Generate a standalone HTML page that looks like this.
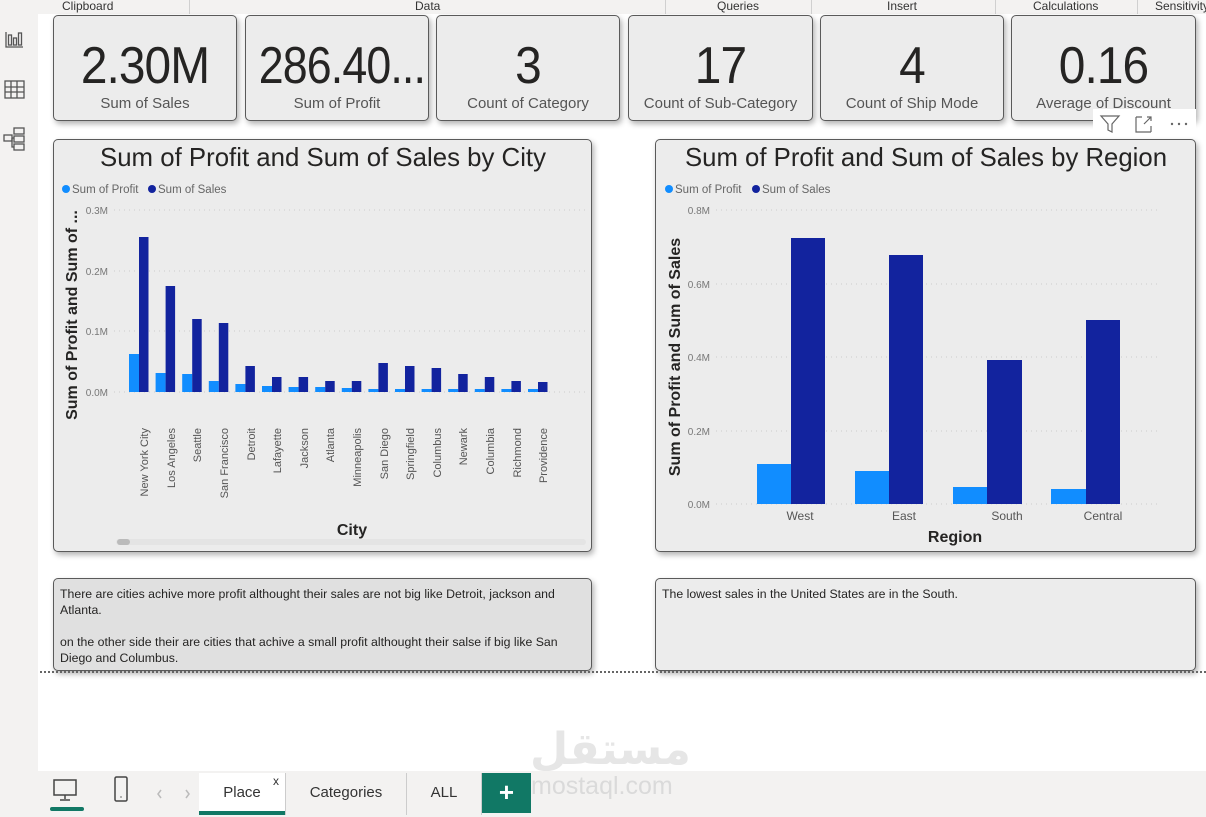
<!DOCTYPE html>
<html><head><meta charset="utf-8"><style>
*{margin:0;padding:0;box-sizing:border-box}
body{width:1206px;height:817px;overflow:hidden;background:#fff;font-family:"Liberation Sans",sans-serif;position:relative;color:#252423}
.abs{position:absolute}
.rib{top:0;left:0;width:1206px;height:14px;background:#f3f2f1;font-size:12px;color:#333}
.rib span{position:absolute;top:-1px}
.rib i{position:absolute;top:0;width:1px;height:14px;background:#d0d0d0}
.side{top:14px;left:0;width:38px;height:757px;background:#f3f2f1}
.card{background:#ececec;border:1px solid #5a5a5a;border-radius:5px;box-shadow:2px 3px 6px rgba(0,0,0,.3);text-align:center}
.card .v{font-size:52px;line-height:52px;margin-top:24px;letter-spacing:-1px;color:#252423;transform:scaleX(.92)}
.card .l{font-size:15px;color:#555;margin-top:3px;white-space:nowrap}
.ch{background:#ececec;border:1px solid #5a5a5a;border-radius:5px;box-shadow:2px 3px 6px rgba(0,0,0,.3)}
.tb{border:1px solid #5a5a5a;border-radius:5px;box-shadow:2px 3px 6px rgba(0,0,0,.3);font-size:12px;line-height:16px;padding:7px 6px;color:#252423}
.bot{top:771px;left:0;width:1206px;height:46px;background:#f3f2f1}
.tab{top:773px;height:42px;font-size:15px;text-align:center;line-height:40px;color:#333;border-right:1px solid #ccc}
</style></head><body>
<div class="abs rib">
<span style="left:62px">Clipboard</span><i style="left:189px"></i>
<span style="left:415px">Data</span><i style="left:665px"></i>
<span style="left:717px">Queries</span><i style="left:811px"></i>
<span style="left:887px">Insert</span><i style="left:995px"></i>
<span style="left:1033px">Calculations</span><i style="left:1137px"></i>
<span style="left:1155px">Sensitivity</span>
</div>
<div class="abs side">
<svg width="38" height="140" style="position:absolute;top:10px;left:0" fill="none" stroke="#555" stroke-width="1.3">
<path d="M6 8v15h17"/><rect x="8.5" y="11" width="3" height="10"/><rect x="13.5" y="14" width="3" height="7"/><rect x="18.5" y="9" width="3" height="12"/>
<rect x="5" y="57" width="19" height="17"/><path d="M5 63h19M5 68h19M11 57v17M17 57v17"/>
<rect x="4" y="111" width="8" height="6"/><rect x="14" y="104" width="10" height="6"/><rect x="14" y="112" width="10" height="6"/><rect x="14" y="120" width="10" height="6"/><path d="M12 114h2M12 114v9h2"/>
</svg>
</div>

<div class="abs card" style="left:53px;top:15px;width:184px;height:106px"><div class="v">2.30M</div><div class="l">Sum of Sales</div></div>
<div class="abs card" style="left:245px;top:15px;width:184px;height:106px"><div class="v" style="transform:scaleX(.86)">286.40...</div><div class="l">Sum of Profit</div></div>
<div class="abs card" style="left:436px;top:15px;width:184px;height:106px"><div class="v">3</div><div class="l">Count of Category</div></div>
<div class="abs card" style="left:628px;top:15px;width:185px;height:106px"><div class="v">17</div><div class="l">Count of Sub-Category</div></div>
<div class="abs card" style="left:820px;top:15px;width:184px;height:106px"><div class="v">4</div><div class="l">Count of Ship Mode</div></div>
<div class="abs card" style="left:1011px;top:15px;width:185px;height:106px"><div class="v">0.16</div><div class="l">Average of Discount</div></div>

<div class="abs ch" style="left:53px;top:139px;width:539px;height:413px"></div>
<div class="abs ch" style="left:655px;top:139px;width:541px;height:413px"></div>

<div class="abs" style="left:1093px;top:109px;width:103px;height:27px;background:#fff"></div>

<div class="abs tb" style="left:53px;top:578px;width:539px;height:93px;background:#e0e0e0;font-size:12.3px">There are cities achive more profit althought their sales are not big like Detroit, jackson and Atlanta.<br><br>on the other side their are cities that achive a small profit althought their salse if big like San Diego and Columbus.</div>
<div class="abs tb" style="left:655px;top:578px;width:541px;height:93px;background:#ececec;font-size:12.3px">The lowest sales in the United States are in the South.</div>
<div class="abs" style="left:40px;top:671px;width:1166px;border-top:2px dotted #666"></div>

<div class="abs" style="left:530px;top:722px;font-family:'DejaVu Sans',sans-serif;font-size:44px;font-weight:bold;color:#e6e6e6;line-height:56px">مستقل</div>

<div class="abs bot"></div>
<svg class="abs" style="left:40px;top:771px" width="160" height="46" fill="none" stroke="#444" stroke-width="1.5">
<rect x="14" y="9" width="22" height="15"/><path d="M25 24v4M20 29h10"/>
<path d="M12 38h30" stroke="#117865" stroke-width="4" stroke-linecap="round"/>
<rect x="75" y="6" width="12" height="24" rx="1.5"/><path d="M80.5 26h1"/>
<path d="M121 19l-3 4 3 4M146 19l3 4-3 4" stroke="#bbb"/>
</svg>
<div class="abs tab" style="left:199px;width:87px;background:#fff">Place<span style="position:absolute;right:6px;top:-12px;font-size:12px">x</span><div style="position:absolute;left:0;bottom:0;width:86px;height:4px;background:#117865"></div></div>
<div class="abs tab" style="left:286px;width:121px">Categories</div>
<div class="abs tab" style="left:407px;width:75px">ALL</div>
<div class="abs" style="left:482px;top:773px;width:49px;height:40px;background:#117865;color:#fff;font-size:26px;font-weight:bold;text-align:center;line-height:38px">+</div>
<div class="abs" style="left:531px;top:772px;font-size:25px;color:#dadada">mostaql.com</div>

<svg class="abs" style="left:0;top:0" width="1206" height="817" font-family="Liberation Sans, sans-serif">
<g fill="none" stroke="#666" stroke-width="1.2">
<path d="M1101 116h18l-7 8v8l-4-2v-6z"/>
<path d="M1136 117v15h15M1136 117h6M1151 126v6M1144 124l7-7M1147 117h4v4"/>
</g>
<g fill="#666"><circle cx="1172" cy="124" r="1.2"/><circle cx="1179" cy="124" r="1.2"/><circle cx="1186" cy="124" r="1.2"/></g>

<text x="323" y="166" font-size="26" text-anchor="middle" fill="#252423" textLength="446" lengthAdjust="spacingAndGlyphs">Sum of Profit and Sum of Sales by City</text>
<circle cx="66" cy="189" r="4" fill="#118dff"/><text x="72" y="193" font-size="11.5" fill="#666">Sum of Profit</text>
<circle cx="152" cy="189" r="4" fill="#12239e"/><text x="158" y="193" font-size="11.5" fill="#666">Sum of Sales</text>
<g font-size="10" fill="#777" text-anchor="end"><text x="108" y="214">0.3M</text><text x="108" y="275">0.2M</text><text x="108" y="335">0.1M</text><text x="108" y="396">0.0M</text></g>
<g stroke="#ccc" stroke-dasharray="1 4"><path d="M114 210H585M114 271H585M114 331H585M114 392H585"/></g>
<text transform="translate(77,315) rotate(-90)" font-size="16" font-weight="bold" text-anchor="middle" fill="#252423">Sum of Profit and Sum of ...</text>
<g fill="#118dff">
<rect x="129" y="354" width="10" height="38"/><rect x="155.6" y="373" width="10" height="19"/><rect x="182.2" y="374" width="10" height="18"/><rect x="208.8" y="381" width="10" height="11"/><rect x="235.4" y="384" width="10" height="8"/><rect x="262" y="386" width="10" height="6"/><rect x="288.6" y="387" width="10" height="5"/><rect x="315.2" y="387" width="10" height="5"/><rect x="341.8" y="388" width="10" height="4"/><rect x="368.4" y="389" width="10" height="3"/><rect x="395" y="389" width="10" height="3"/><rect x="421.6" y="389" width="10" height="3"/><rect x="448.2" y="389" width="10" height="3"/><rect x="474.8" y="389" width="10" height="3"/><rect x="501.4" y="389" width="10" height="3"/><rect x="528" y="389" width="10" height="3"/>
</g>
<g fill="#12239e">
<rect x="139" y="237" width="9.5" height="155"/><rect x="165.6" y="286" width="9.5" height="106"/><rect x="192.2" y="319" width="9.5" height="73"/><rect x="218.8" y="323" width="9.5" height="69"/><rect x="245.4" y="366" width="9.5" height="26"/><rect x="272" y="377" width="9.5" height="15"/><rect x="298.6" y="377" width="9.5" height="15"/><rect x="325.2" y="381" width="9.5" height="11"/><rect x="351.8" y="381" width="9.5" height="11"/><rect x="378.4" y="363" width="9.5" height="29"/><rect x="405" y="366" width="9.5" height="26"/><rect x="431.6" y="368" width="9.5" height="24"/><rect x="458.2" y="374" width="9.5" height="18"/><rect x="484.8" y="377" width="9.5" height="15"/><rect x="511.4" y="381" width="9.5" height="11"/><rect x="538" y="382" width="9.5" height="10"/>
</g>
<g font-size="11" fill="#555" text-anchor="end">
<text transform="translate(148,428) rotate(-90)">New York City</text>
<text transform="translate(175,428) rotate(-90)">Los Angeles</text>
<text transform="translate(201,428) rotate(-90)">Seattle</text>
<text transform="translate(228,428) rotate(-90)">San Francisco</text>
<text transform="translate(255,428) rotate(-90)">Detroit</text>
<text transform="translate(281,428) rotate(-90)">Lafayette</text>
<text transform="translate(308,428) rotate(-90)">Jackson</text>
<text transform="translate(334,428) rotate(-90)">Atlanta</text>
<text transform="translate(361,428) rotate(-90)">Minneapolis</text>
<text transform="translate(388,428) rotate(-90)">San Diego</text>
<text transform="translate(414,428) rotate(-90)">Springfield</text>
<text transform="translate(441,428) rotate(-90)">Columbus</text>
<text transform="translate(467,428) rotate(-90)">Newark</text>
<text transform="translate(494,428) rotate(-90)">Columbia</text>
<text transform="translate(521,428) rotate(-90)">Richmond</text>
<text transform="translate(547,428) rotate(-90)">Providence</text>
</g>
<text x="352" y="535" font-size="16" font-weight="bold" text-anchor="middle" fill="#252423">City</text>
<rect x="116" y="539" width="470" height="6" rx="3" fill="#e4e4e4"/><rect x="117" y="539" width="13" height="6" rx="3" fill="#bbb"/>

<text x="926" y="166" font-size="26" text-anchor="middle" fill="#252423" textLength="482" lengthAdjust="spacingAndGlyphs">Sum of Profit and Sum of Sales by Region</text>
<circle cx="669" cy="189" r="4" fill="#118dff"/><text x="675" y="193" font-size="11.5" fill="#666">Sum of Profit</text>
<circle cx="756" cy="189" r="4" fill="#12239e"/><text x="762" y="193" font-size="11.5" fill="#666">Sum of Sales</text>
<g font-size="10" fill="#777" text-anchor="end"><text x="710" y="214">0.8M</text><text x="710" y="288">0.6M</text><text x="710" y="361">0.4M</text><text x="710" y="435">0.2M</text><text x="710" y="508">0.0M</text></g>
<g stroke="#ccc" stroke-dasharray="1 4"><path d="M716 210H1160M716 284H1160M716 357H1160M716 431H1160M716 504H1160"/></g>
<text transform="translate(680,357) rotate(-90)" font-size="16" font-weight="bold" text-anchor="middle" fill="#252423">Sum of Profit and Sum of Sales</text>
<g fill="#118dff"><rect x="757" y="464" width="34" height="40"/><rect x="855" y="471" width="34" height="33"/><rect x="953" y="487" width="34" height="17"/><rect x="1051" y="489" width="35" height="15"/></g>
<g fill="#12239e"><rect x="791" y="238" width="34" height="266"/><rect x="889" y="255" width="34" height="249"/><rect x="987" y="360" width="35" height="144"/><rect x="1086" y="320" width="34" height="184"/></g>
<g font-size="12" fill="#555" text-anchor="middle"><text x="800" y="520">West</text><text x="904" y="520">East</text><text x="1007" y="520">South</text><text x="1103" y="520">Central</text></g>
<text x="955" y="542" font-size="16" font-weight="bold" text-anchor="middle" fill="#252423">Region</text>
</svg>
</body></html>
